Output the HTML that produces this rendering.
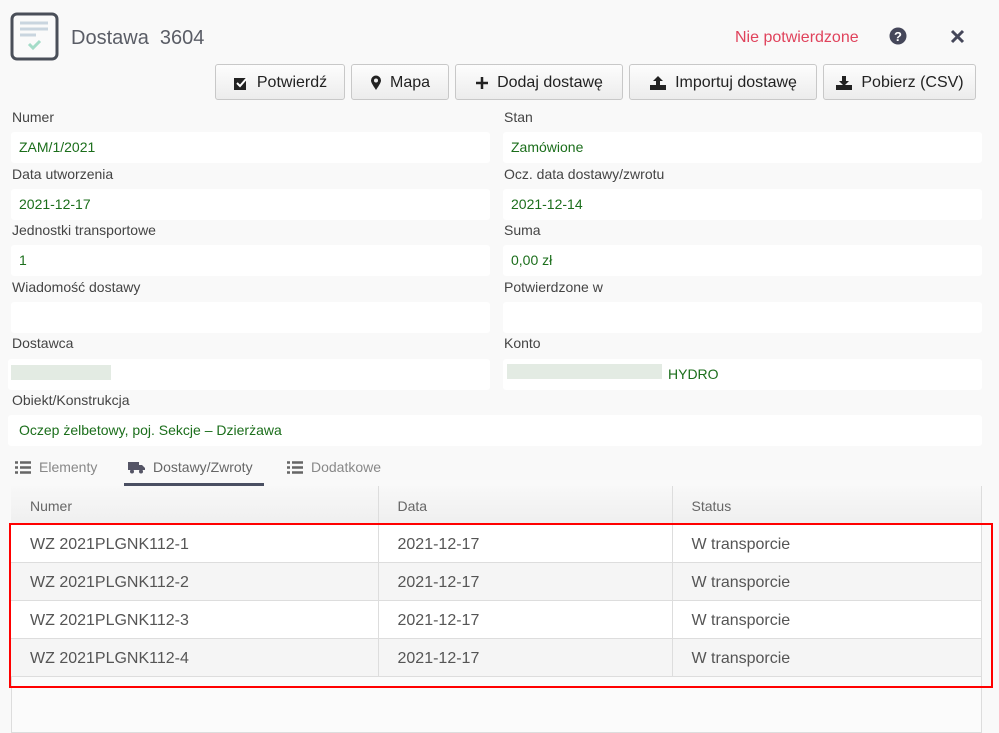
<!DOCTYPE html>
<html><head><meta charset="utf-8"><style>
*{box-sizing:border-box;margin:0;padding:0}
body{width:999px;height:733px;overflow:hidden;background:#f9f9f9;font-family:"Liberation Sans","DejaVu Sans",sans-serif;color:#333;position:relative}
.a{position:absolute}
.title{left:71px;top:27px;font-size:20px;color:#5a5d66}
.btn{position:absolute;top:64px;height:36px;border:1px solid #c8c8c8;border-radius:3px;background:linear-gradient(#fdfdfd,#ececec);font-size:16px;color:#222;display:flex;align-items:center;justify-content:center;gap:8px;padding-top:2px}
.lbl{position:absolute;font-size:14px;color:#444}
.box{position:absolute;height:31px;background:#fff;border-radius:3px;font-size:14px;color:#1b6e1b;padding:7px 0 0 8px}
.tab{position:absolute;top:459px;font-size:14px;color:#888;display:flex;align-items:center;gap:8px}
table{position:absolute;left:11px;top:486px;width:971px;border-collapse:collapse;font-size:16px;color:#555}
td,th{height:38px;padding-left:19px;padding-top:3px;text-align:left;font-weight:normal;border-right:1px solid #ddd;border-bottom:1px solid #ddd}
th{font-size:14px;color:#666;background:linear-gradient(#f8f8f8,#efefef)}
tr.o td{background:#fff}tr.e td{background:#f5f5f5}
</style></head><body>
<svg class="a" style="left:10px;top:12px" width="50" height="50" viewBox="0 0 50 50"><rect x="2" y="2" width="45" height="45" rx="5" fill="#fafafa" stroke="#4a4f59" stroke-width="3"/><path d="M10 11H38M10 17H38M10 23H26" stroke="#c9d5df" stroke-width="3"/><path d="M19 32l4 4 7-7" stroke="#a4dcc8" stroke-width="3" fill="none"/></svg>
<div class="a title">Dostawa&nbsp; 3604</div>
<div class="a" style="left:735px;top:29px;font-size:16px;color:#e0435c">Nie potwierdzone</div>
<svg class="a" style="left:889px;top:27px" width="18" height="18" viewBox="0 0 18 18"><circle cx="9" cy="9" r="8.5" fill="#45475a"/><text x="9" y="14" font-size="13" font-weight="bold" fill="#fff" text-anchor="middle" font-family="Liberation Sans">?</text></svg>
<svg class="a" style="left:950px;top:29px" width="15" height="15"><path d="M2 2L13 13M13 2L2 13" stroke="#45475a" stroke-width="3"/></svg>
<div class="btn" style="left:215px;width:130px"><svg width="16" height="16"><rect x="1" y="3" width="12" height="12" fill="#222"/><path d="M4 8l3 3 7-8" stroke="#fff" stroke-width="2" fill="none"/></svg>Potwierdź</div>
<div class="btn" style="left:351px;width:98px"><svg width="12" height="16"><path d="M6 15C2 9 1 7 1 5.5a5 5 0 0110 0C11 7 10 9 6 15z" fill="#222"/><circle cx="6" cy="5.5" r="2" fill="#eee"/></svg>Mapa</div>
<div class="btn" style="left:455px;width:168px"><svg width="14" height="14"><path d="M7 1V13M1 7H13" stroke="#222" stroke-width="2.5"/></svg>Dodaj dostawę</div>
<div class="btn" style="left:629px;width:188px"><svg width="18" height="16"><path d="M9 1l5 5H11v4H7V6H4z" fill="#222"/><rect x="1" y="10" width="16" height="5" fill="#222"/></svg>Importuj dostawę</div>
<div class="btn" style="left:823px;width:153px"><svg width="18" height="16"><path d="M9 11l5-5H11V1H7v5H4z" fill="#222"/><rect x="1" y="10" width="16" height="5" fill="#222"/></svg>Pobierz (CSV)</div>

<div class="lbl" style="left:12px;top:109px">Numer</div><div class="lbl" style="left:504px;top:109px">Stan</div>
<div class="box" style="left:11px;top:132px;width:479px">ZAM/1/2021</div><div class="box" style="left:503px;top:132px;width:479px">Zamówione</div>
<div class="lbl" style="left:12px;top:166px">Data utworzenia</div><div class="lbl" style="left:504px;top:166px">Ocz. data dostawy/zwrotu</div>
<div class="box" style="left:11px;top:189px;width:479px">2021-12-17</div><div class="box" style="left:503px;top:189px;width:479px">2021-12-14</div>
<div class="lbl" style="left:12px;top:222px">Jednostki transportowe</div><div class="lbl" style="left:504px;top:222px">Suma</div>
<div class="box" style="left:11px;top:245px;width:479px">1</div><div class="box" style="left:503px;top:245px;width:479px">0,00 zł</div>
<div class="lbl" style="left:12px;top:279px">Wiadomość dostawy</div><div class="lbl" style="left:504px;top:279px">Potwierdzone w</div>
<div class="box" style="left:11px;top:302px;width:479px"></div><div class="box" style="left:503px;top:302px;width:479px"></div>
<div class="lbl" style="left:12px;top:335px">Dostawca</div><div class="lbl" style="left:504px;top:335px">Konto</div>
<div class="box" style="left:8px;top:359px;width:482px"><div class="a" style="left:3px;top:6px;width:100px;height:15px;background:#e3ebe3"></div></div>
<div class="box" style="left:503px;top:359px;width:479px;padding-left:165px">HYDRO<div class="a" style="left:4px;top:5px;width:155px;height:15px;background:#e3ebe3"></div></div>
<div class="lbl" style="left:12px;top:392px">Obiekt/Konstrukcja</div>
<div class="box" style="left:8px;top:415px;width:974px;padding-left:11px">Oczep żelbetowy, poj. Sekcje – Dzierżawa</div>

<div class="tab" style="left:15px"><svg width="16" height="13"><path d="M0 1.5h3M5 1.5h11M0 6.5h3M5 6.5h11M0 11.5h3M5 11.5h11" stroke="#666" stroke-width="2.5"/></svg>Elementy</div>
<div class="tab" style="left:128px;color:#666"><svg width="17" height="13"><rect x="0" y="1" width="11" height="8" fill="#556"/><path d="M11 4h3l3 3v2h-6z" fill="#556"/><circle cx="4" cy="10.5" r="2" fill="#556"/><circle cx="13" cy="10.5" r="2" fill="#556"/></svg>Dostawy/Zwroty</div>
<div class="a" style="left:124px;top:483px;width:140px;height:3px;background:#4a4f62"></div>
<div class="tab" style="left:287px"><svg width="16" height="13"><path d="M0 1.5h3M5 1.5h11M0 6.5h3M5 6.5h11M0 11.5h3M5 11.5h11" stroke="#666" stroke-width="2.5"/></svg>Dodatkowe</div>

<div class="a" style="left:11px;top:486px;width:971px;height:247px;background:#fbfbfb;border:1px solid #ddd"></div>
<table>
<tr><th style="width:367px">Numer</th><th style="width:294px">Data</th><th>Status</th></tr>
<tr class="o"><td>WZ 2021PLGNK112-1</td><td>2021-12-17</td><td>W transporcie</td></tr>
<tr class="e"><td>WZ 2021PLGNK112-2</td><td>2021-12-17</td><td>W transporcie</td></tr>
<tr class="o"><td>WZ 2021PLGNK112-3</td><td>2021-12-17</td><td>W transporcie</td></tr>
<tr class="e"><td>WZ 2021PLGNK112-4</td><td>2021-12-17</td><td>W transporcie</td></tr>
</table>
<div class="a" style="left:9px;top:523px;width:984px;height:165px;border:2px solid #f00"></div>
</body></html>
